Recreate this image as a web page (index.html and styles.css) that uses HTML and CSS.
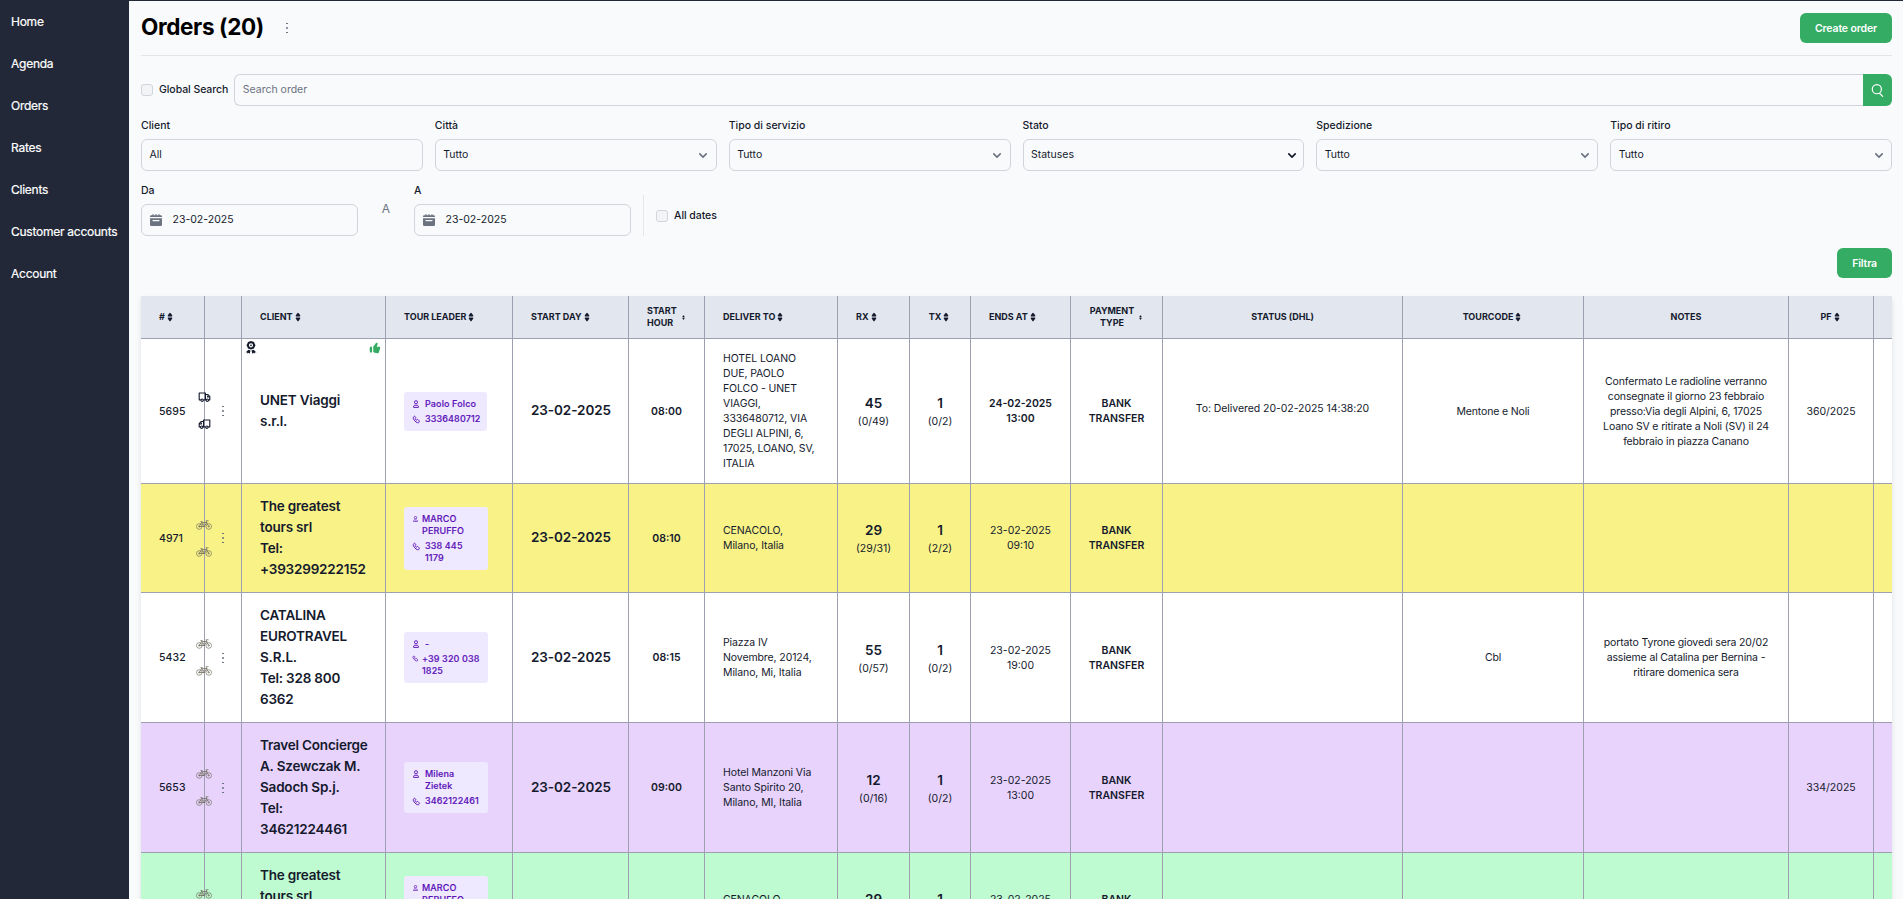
FILE: index.html
```html
<!DOCTYPE html>
<html lang="it">
<head>
<meta charset="utf-8">
<title>Orders</title>
<link rel="stylesheet" href="styles.css">
</head>
<body>
<svg class="defs" width="0" height="0">
  <symbol id="sort" viewBox="0 0 24 24"><path fill="currentColor" d="M8.574 11.024h6.852a2.075 2.075 0 0 0 1.847-1.086 1.9 1.9 0 0 0-.11-1.986L13.736 2.9a2.122 2.122 0 0 0-3.472 0L6.837 7.952a1.9 1.9 0 0 0-.11 1.986 2.074 2.074 0 0 0 1.847 1.086Zm6.852 1.952H8.574a2.072 2.072 0 0 0-1.847 1.087 1.9 1.9 0 0 0 .11 1.985l3.426 5.05a2.123 2.123 0 0 0 3.472 0l3.427-5.05a1.9 1.9 0 0 0 .11-1.985 2.074 2.074 0 0 0-1.846-1.087Z"/></symbol>
  <symbol id="dots" viewBox="0 0 2 12"><path fill="currentColor" d="M0 1h2v1H0zM0 5.2h2v1.6H0zM0 10h2v1H0z"/></symbol>
  <symbol id="chev" viewBox="0 0 10 6"><path fill="none" stroke="currentColor" stroke-width="2" stroke-linecap="round" stroke-linejoin="round" d="m1 1 4 4 4-4"/></symbol>
  <symbol id="search" viewBox="0 0 20 20"><path fill="none" stroke="currentColor" stroke-width="1.9" stroke-linecap="round" d="m19 19-4-4m2-7A7 7 0 1 1 3 8a7 7 0 0 1 14 0Z" transform="translate(-1)"/></symbol>
  <symbol id="cal" viewBox="0 0 20 20"><path fill="currentColor" d="M20 4a2 2 0 0 0-2-2h-2V1a1 1 0 0 0-2 0v1h-3V1a1 1 0 0 0-2 0v1H6V1a1 1 0 0 0-2 0v1H2a2 2 0 0 0-2 2v1h20V4ZM0 18a2 2 0 0 0 2 2h16a2 2 0 0 0 2-2V7H0v11Zm5-8h10a1 1 0 0 1 0 2H5a1 1 0 0 1 0-2Z"/></symbol>
  <symbol id="user" viewBox="0 0 14 18"><path fill="none" stroke="currentColor" stroke-width="2.200" stroke-linejoin="round" d="M7 8.500a3.600 3.600 0 1 0 0-7.200 3.600 3.600 0 0 0 0 7.200ZM4 11.500c1.500 1 4.500 1 6 0L12.500 14v3H1.500v-3Z"/></symbol>
  <symbol id="phone" viewBox="0 0 24 24"><path fill="none" stroke="currentColor" stroke-width="2.6" stroke-linejoin="round" d="M18.400 14.500 16.200 12.300a1.600 1.600 0 0 0-2.300 0l-.7.8a1.600 1.600 0 0 1-2.300 0l-1.800-1.900a1.600 1.600 0 0 1 0-2.300l.7-.7a1.600 1.600 0 0 0 0-2.300L7.700 3.800a1.700 1.700 0 0 0-2.400 0C3.400 5.600 2.600 7.700 4.200 11c1.500 3 5.600 7.600 9.100 9 2.700 1.200 4 .9 5.500-.6.9-.8.6-4-.4-4.900Z"/></symbol>
  <symbol id="truck" viewBox="0 0 20 16"><g fill="none" stroke="currentColor" stroke-width="1.8" stroke-linejoin="round"><path d="M4 12.500H1.500v-11h10v11H8.500M11.500 4h4L18.500 7.500v5h-2M11.500 12.500h1M18 8h-3V5.500"/><circle cx="6.200" cy="13" r="1.900"/><circle cx="14.500" cy="13" r="1.900"/></g></symbol>
  <symbol id="bike" viewBox="0 0 32 20"><g fill="none" stroke="currentColor" stroke-width="1.300"><circle cx="6.500" cy="13" r="5.600"/><circle cx="25.500" cy="13" r="5.600"/><circle cx="6.500" cy="13" r="1.400"/><circle cx="25.500" cy="13" r="1.400"/><path d="M6.500 13 11 5h10l4.500 8M11 5l5 9 5.500-9M6.500 13H16M20 1.500h5M9 3h4M20 1.500l2 5M13 7l4 3" stroke-width="1.500"/></g></symbol>
  <symbol id="award" viewBox="0 0 24 26"><path fill="currentColor" fill-rule="evenodd" d="M12 0l3 1.200L18 2l1.200 3L21 8.500 19.200 12 18 15l-3 1-3 1.200L9 16l-3-1-1.200-3L3 8.500 4.800 5 6 2l3-.8zM12 4.500a4.200 4.200 0 1 0 0 8.400 4.200 4.200 0 0 0 0-8.400zM12 7a1.700 1.700 0 1 1 0 3.400A1.700 1.700 0 0 1 12 7zM7 17.500l4 1.500-1.500 6.500-2.500-2-1.500 2-1.500-3-3 .5zM17 17.500l-4 1.500 1.500 6.500 2.500-2 1.500 2 1.500-3 3 .5z"/></symbol>
  <symbol id="thumb" viewBox="0 0 24 24"><path fill="currentColor" fill-rule="evenodd" d="M15.030 9.684h3.965c.322 0 .64.080.925.232.286.153.532.374.717.645a2.109 2.109 0 0 1 .242 1.883l-2.360 7.201c-.288.814-.480 1.355-1.884 1.355-2.072 0-4.276-.677-6.157-1.256-.472-.145-.924-.284-1.348-.404h-.115V9.478a25.485 25.485 0 0 0 4.238-5.514 1.800 1.800 0 0 1 .901-.830 1.740 1.740 0 0 1 1.210-.048c.396.130.736.397.960.757.225.360.320.788.269 1.211l-1.562 4.630ZM4.177 10H7v8a2 2 0 1 1-4 0v-6.823C3 10.527 3.527 10 4.176 10Z"/></symbol>
</svg>
<div class="app">
  <nav class="sidebar">
    <a>Home</a><a>Agenda</a><a>Orders</a><a>Rates</a><a>Clients</a><a>Customer accounts</a><a>Account</a>
  </nav>
  <main class="main">
    <header class="head">
      <h1>Orders (20)</h1>
      <svg class="dots"><use href="#dots"/></svg>
      <button class="btn">Create order</button>
    </header>
    <div class="search-row">
      <span class="check"></span><label>Global Search</label>
      <div class="field search-field">Search order</div>
      <button class="search-btn"><svg><use href="#search"/></svg></button>
    </div>
    <div class="filters">
      <div><label>Client</label><div class="field">All</div></div>
      <div><label>Città</label><div class="field">Tutto<svg class="chev"><use href="#chev"/></svg></div></div>
      <div><label>Tipo di servizio</label><div class="field">Tutto<svg class="chev"><use href="#chev"/></svg></div></div>
      <div><label>Stato</label><div class="field">Statuses<svg class="chev dark"><use href="#chev"/></svg></div></div>
      <div><label>Spedizione</label><div class="field">Tutto<svg class="chev"><use href="#chev"/></svg></div></div>
      <div><label>Tipo di ritiro</label><div class="field">Tutto<svg class="chev"><use href="#chev"/></svg></div></div>
    </div>
    <div class="dates">
      <div class="date"><label>Da</label><div class="field"><svg class="cal"><use href="#cal"/></svg>23-02-2025</div></div>
      <span class="to">A</span>
      <div class="date"><label>A</label><div class="field"><svg class="cal"><use href="#cal"/></svg>23-02-2025</div></div>
      <div class="all-dates"><span class="check"></span><label>All dates</label></div>
    </div>
    <div class="actions"><button class="btn">Filtra</button></div>
    <div class="table-wrap">
      <table>
        <colgroup><col class="c1"><col class="c2"><col class="c3"><col class="c4"><col class="c5"><col class="c6"><col class="c7"><col class="c8"><col class="c9"><col class="c10"><col class="c11"><col class="c12"><col class="c13"><col class="c14"><col class="c15"><col class="c16"></colgroup>
        <thead><tr>
          <th><div class="th">#<svg><use href="#sort"/></svg></div></th>
          <th></th>
          <th><div class="th">CLIENT<svg><use href="#sort"/></svg></div></th>
          <th><div class="th">TOUR LEADER<svg><use href="#sort"/></svg></div></th>
          <th><div class="th">START DAY<svg><use href="#sort"/></svg></div></th>
          <th><div class="th wrap">START<br>HOUR<svg class="tiny"><use href="#sort"/></svg></div></th>
          <th><div class="th">DELIVER TO<svg><use href="#sort"/></svg></div></th>
          <th><div class="th">RX<svg><use href="#sort"/></svg></div></th>
          <th><div class="th mid">TX<svg><use href="#sort"/></svg></div></th>
          <th><div class="th">ENDS AT<svg><use href="#sort"/></svg></div></th>
          <th><div class="th mid"><span>PAYMENT<br>TYPE</span><svg class="tiny"><use href="#sort"/></svg></div></th>
          <th><div class="th mid">STATUS (DHL)</div></th>
          <th><div class="th mid">TOURCODE<svg><use href="#sort"/></svg></div></th>
          <th><div class="th mid">NOTES</div></th>
          <th><div class="th mid">PF<svg><use href="#sort"/></svg></div></th>
          <th></th>
        </tr></thead>
        <tbody>
          <tr>
            <td class="id">5695<span class="ship truck"><svg><use href="#truck"/></svg><svg class="flip"><use href="#truck"/></svg></span></td>
            <td class="menu"><svg class="dots"><use href="#dots"/></svg></td>
            <td class="client"><svg class="award"><use href="#award"/></svg><svg class="thumb"><use href="#thumb"/></svg>UNET Viaggi<br>s.r.l.</td>
            <td><div class="leader fit"><p><svg class="user"><use href="#user"/></svg>Paolo Folco</p><p><svg class="phone"><use href="#phone"/></svg>3336480712</p></div></td>
            <td class="day">23-02-2025</td><td class="hour">08:00</td>
            <td class="place">HOTEL LOANO<br>DUE, PAOLO<br>FOLCO - UNET<br>VIAGGI,<br>3336480712, VIA<br>DEGLI ALPINI, 6,<br>17025, LOANO, SV,<br>ITALIA</td>
            <td class="num"><b>45</b>(0/49)</td><td class="num"><b>1</b>(0/2)</td>
            <td class="c strong">24-02-2025<br>13:00</td><td class="c strong">BANK<br>TRANSFER</td>
            <td class="c status">To: Delivered 20-02-2025 14:38:20</td>
            <td class="c note">Mentone e Noli</td>
            <td class="c note">Confermato Le radioline verranno<br>consegnate il giorno 23 febbraio<br>presso:Via degli Alpini, 6, 17025<br>Loano SV e ritirate a Noli (SV) il 24<br>febbraio in piazza Canano</td>
            <td class="c">360/2025</td><td></td>
          </tr>
          <tr class="yellow">
            <td class="id">4971<span class="ship bike"><svg><use href="#bike"/></svg><svg><use href="#bike"/></svg></span></td>
            <td class="menu"><svg class="dots"><use href="#dots"/></svg></td>
            <td class="client">The greatest<br>tours srl<br>Tel:<br>+393299222152</td>
            <td><div class="leader"><p><svg class="user small"><use href="#user"/></svg>MARCO<br>PERUFFO</p><p><svg class="phone"><use href="#phone"/></svg>338 445<br>1179</p></div></td>
            <td class="day">23-02-2025</td><td class="hour">08:10</td>
            <td class="place">CENACOLO,<br>Milano, Italia</td>
            <td class="num"><b>29</b>(29/31)</td><td class="num"><b>1</b>(2/2)</td>
            <td class="c">23-02-2025<br>09:10</td><td class="c strong">BANK<br>TRANSFER</td>
            <td></td><td></td><td></td><td></td><td></td>
          </tr>
          <tr>
            <td class="id">5432<span class="ship bike"><svg><use href="#bike"/></svg><svg><use href="#bike"/></svg></span></td>
            <td class="menu"><svg class="dots"><use href="#dots"/></svg></td>
            <td class="client">CATALINA<br>EUROTRAVEL<br>S.R.L.<br>Tel: 328 800<br>6362</td>
            <td><div class="leader"><p><svg class="user"><use href="#user"/></svg>-</p><p><svg class="phone small"><use href="#phone"/></svg>+39 320 038<br>1825</p></div></td>
            <td class="day">23-02-2025</td><td class="hour">08:15</td>
            <td class="place">Piazza IV<br>Novembre, 20124,<br>Milano, Mi, Italia</td>
            <td class="num"><b>55</b>(0/57)</td><td class="num"><b>1</b>(0/2)</td>
            <td class="c">23-02-2025<br>19:00</td><td class="c strong">BANK<br>TRANSFER</td>
            <td></td><td class="c note">Cbl</td>
            <td class="c note">portato Tyrone giovedì sera 20/02<br>assieme al Catalina per Bernina -<br>ritirare domenica sera</td>
            <td></td><td></td>
          </tr>
          <tr class="purple">
            <td class="id">5653<span class="ship bike"><svg><use href="#bike"/></svg><svg><use href="#bike"/></svg></span></td>
            <td class="menu"><svg class="dots"><use href="#dots"/></svg></td>
            <td class="client">Travel Concierge<br>A. Szewczak M.<br>Sadoch Sp.j.<br>Tel:<br>34621224461</td>
            <td><div class="leader"><p><svg class="user"><use href="#user"/></svg>Milena<br>Zietek</p><p><svg class="phone"><use href="#phone"/></svg>3462122461</p></div></td>
            <td class="day">23-02-2025</td><td class="hour">09:00</td>
            <td class="place">Hotel Manzoni Via<br>Santo Spirito 20,<br>Milano, MI, Italia</td>
            <td class="num"><b>12</b>(0/16)</td><td class="num"><b>1</b>(0/2)</td>
            <td class="c">23-02-2025<br>13:00</td><td class="c strong">BANK<br>TRANSFER</td>
            <td></td><td></td><td></td><td class="c">334/2025</td><td></td>
          </tr>
          <tr class="green">
            <td class="id"><span class="ship bike"><svg><use href="#bike"/></svg><svg><use href="#bike"/></svg></span></td>
            <td class="menu"></td>
            <td class="client">The greatest<br>tours srl<br>Tel:<br>+393299222152</td>
            <td><div class="leader"><p><svg class="user small"><use href="#user"/></svg>MARCO<br>PERUFFO</p><p><svg class="phone"><use href="#phone"/></svg>338 445<br>1179</p></div></td>
            <td></td><td></td>
            <td class="place">CENACOLO,<br>Milano, Italia</td>
            <td class="num"><b>29</b>(29/31)</td><td class="num"><b>1</b>(2/2)</td>
            <td class="c">23-02-2025<br>09:10</td><td class="c strong">BANK<br>TRANSFER</td>
            <td></td><td></td><td></td><td></td><td></td>
          </tr>
        </tbody>
      </table>
    </div>
  </main>
</div>
</body>
</html>
```
FILE: styles.css
```css
* { box-sizing: border-box; }
body { margin: 0; background: #f9fafc; color: #151a2d; font: 10.5px/15px Inter, sans-serif; }
h1, p { margin: 0; }
button { border: 0; font: inherit; color: #fff; background: #34ac64; }
svg { display: block; flex: none; }
.defs { position: absolute; }
.app { display: flex; height: 899px; overflow: hidden; border-top: 1px solid #222838; }
.sidebar { flex: none; width: 129px; background: #222838; color: #fff; display: flex; flex-direction: column; font-size: 12px; line-height: 18px; letter-spacing: -.25px; -webkit-text-stroke: .2px #fff; }
.sidebar a { height: 42px; padding: 12px 0 0 11px; white-space: nowrap; }
.main { flex: 1; min-width: 0; padding: 0 11px 0 12px; }
.head { height: 55px; display: flex; align-items: center; border-bottom: 1px solid #e3e5e9; }
.head h1 { font-size: 22.5px; line-height: 30px; font-weight: 700; color: #000; letter-spacing: -.36px; margin-top: -2px; }
.head .dots { margin-left: 22px; }
.dots { width: 2px; height: 12px; color: #6b7280; }
.btn { height: 30px; padding: 0 15px; border-radius: 6px; font-weight: 600; letter-spacing: -.14px; }
.head .btn { margin-left: auto; }
label { display: block; font-weight: 500; }
.search-row { display: flex; align-items: center; margin-top: 18px; height: 32px; }
.check { width: 12px; height: 12px; border: 1px solid #d1d5db; border-radius: 3px; background: #f3f4f6; flex: none; }
.check + label { margin: -1px 0 0 6px; letter-spacing: -.06px; }
.field { height: 32px; display: flex; align-items: center; padding: 0 7.5px 1px; border: 1px solid #d1d4da; border-radius: 6px; }
.search-field { flex: 1; margin-left: 6px; border-right: 0; border-radius: 6px 0 0 6px; color: #6b7280; }
.search-btn { width: 29px; height: 32px; padding: 0; border-radius: 0 6px 6px 0; display: grid; place-items: center; }
.search-btn svg { width: 13px; height: 13px; }
.filters { display: grid; grid-template-columns: repeat(6, 1fr); gap: 12px; margin-top: 12px; }
.filters label, .date label { margin-bottom: 6px; }
.chev { width: 8px; height: 5px; margin: 1px 1px 0 auto; color: #6b7280; }
.chev.dark { margin-right: 0; color: #111827; }
.dates { display: flex; margin-top: 12px; height: 53px; }
.date { width: 217px; }
.cal { width: 12px; height: 12px; margin: 1px 11px 0 0; color: #6b7280; }
.to { width: 56px; text-align: center; color: #6b7280; font-size: 12px; padding-top: 18px; }
.all-dates { display: flex; align-items: center; height: 41px; margin: 12px 0 0 12px; padding: 0 0 0 12px; border-left: 1px solid #e5e7eb; }
.actions { display: flex; justify-content: flex-end; margin: 12px 0 18px; }
.table-wrap { overflow: hidden; box-shadow: 0 3px 5px rgba(0,0,0,.1); height: 620px; }
table { table-layout: fixed; width: 1851px; border-spacing: 0; background: #fff; }
.c1 { width: 64px; } .c2 { width: 37px; } .c3 { width: 144px; } .c4 { width: 127px; }
.c5 { width: 116px; } .c6 { width: 76px; } .c7 { width: 133px; } .c8 { width: 72px; }
.c9 { width: 61px; } .c10 { width: 100px; } .c11 { width: 92px; } .c12 { width: 240px; }
.c13 { width: 181px; } .c14 { width: 205px; } .c15 { width: 85px; } .c16 { width: 118px; }
th, td { padding: 0; border-right: 1px solid #9ca0b0; border-bottom: 1px solid #9ca0b0; white-space: nowrap; text-align: left; }
th { height: 43px; background: #e2e6ef; font-size: 9px; line-height: 12px; font-weight: 700; }
.th { display: flex; align-items: center; padding-left: 18px; }
.th.mid { justify-content: center; padding: 0; text-align: center; }
.th svg { width: 10px; height: 10px; }
.th svg.tiny { width: 5px; height: 5px; margin-left: 4px; }
td { padding: 12px 0 12px 18px; position: relative; }
.yellow td { background: #f8f287; }
.purple td { background: #e8d3fd; }
.green td { background: #bffbd0; }
td.id { font-weight: 500; letter-spacing: .1px; z-index: 1; }
.ship { position: absolute; left: 55px; top: 50%; display: grid; }
.ship.truck { left: 57px; gap: 17px; margin-top: -19px; }
.truck svg { width: 13px; height: 10px; }
.flip { transform: scaleX(-1); }
.ship.bike { gap: 17px; margin-top: -18.5px; color: #6e6a5c; }
.bike svg { width: 16px; height: 10px; }
td.menu .dots { margin-left: -1px; }
td.client { font-size: 13.5px; line-height: 21px; font-weight: 600; letter-spacing: -.2px; }
.award { position: absolute; left: 3px; top: 2px; width: 12px; height: 13px; }
.thumb { position: absolute; right: 3px; top: 2px; width: 14px; height: 14px; color: #34ac64; }
.leader { width: 84px; background: #eee9fe; color: #5b10b8; border-radius: 3px; padding: 6px 0 6px 8px; font-size: 9px; line-height: 12px; font-weight: 500; letter-spacing: .12px; -webkit-text-stroke: .15px #5b10b8; }
.leader.fit { width: 83px; }
.leader p { display: grid; grid-template-columns: auto 1fr; }
.leader p + p { margin-top: 3px; }
.user { width: 6px; height: 8px; margin: 2px 6px 0 1px; }
.user.small { width: 5px; height: 6px; margin: 3px 4px 0 1px; }
.phone { width: 9px; height: 9px; margin: 2px 4px 0 0; }
.phone.small { width: 7px; height: 7px; margin: 2px 3px 0 0; }
td.day { font-size: 13.5px; font-weight: 600; letter-spacing: -.08px; padding-top: 11px; }
td.hour { font-weight: 600; }
td.hour, td.num, td.c { text-align: center; padding-left: 0; }
.num b { display: block; font-size: 13.5px; line-height: 21px; font-weight: 600; }
.strong { font-weight: 600; }
.place { letter-spacing: -.1px; }
.note { letter-spacing: -.15px; }
td.status { padding-bottom: 18px; letter-spacing: -.06px; }
```
